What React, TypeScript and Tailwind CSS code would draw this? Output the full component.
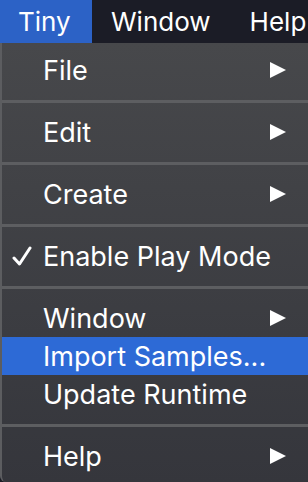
import React from "react";

type Item =
  | { kind: "sep" }
  | { kind: "item"; label: string; submenu?: boolean; checked?: boolean; active?: boolean };

const items: Item[] = [
  { kind: "item", label: "File", submenu: true },
  { kind: "sep" },
  { kind: "item", label: "Edit", submenu: true },
  { kind: "sep" },
  { kind: "item", label: "Create", submenu: true },
  { kind: "sep" },
  { kind: "item", label: "Enable Play Mode", checked: true },
  { kind: "sep" },
  { kind: "item", label: "Window", submenu: true },
  { kind: "item", label: "Import Samples...", active: true },
  { kind: "item", label: "Update Runtime" },
  { kind: "sep" },
  { kind: "item", label: "Help", submenu: true },
];

function Arrow() {
  return (
    <svg width="18" height="16" viewBox="0 0 18 16" className="shrink-0">
      <path d="M1 0 L17 8 L1 16 Z" fill="#ffffff" />
    </svg>
  );
}

function Check() {
  return (
    <svg width="20" height="20" viewBox="0 0 20 20">
      <path
        d="M2 12 L7.5 18 L18 2"
        fill="none"
        stroke="#ffffff"
        strokeWidth="3"
        strokeLinecap="round"
        strokeLinejoin="round"
      />
    </svg>
  );
}

export default function App() {
  return (
    <div
      className="w-[308px] h-[482px] overflow-hidden bg-[#1b1c25] text-white"
      style={{ fontFamily: "Inter, 'Noto Sans', sans-serif" }}
    >
      {/* menu bar */}
      <div className="flex h-[43px] items-center bg-[#1b1c26] text-[26px] leading-none">
        <div className="flex h-full w-[92px] items-center bg-[#2c62c6] pl-[18px]">Tiny</div>
        <div className="pl-[19px]">Window</div>
        <div className="pl-[39px] whitespace-nowrap">Help</div>
      </div>

      {/* dropdown */}
      <div className="h-[439px] w-[330px] rounded-bl-[6px] border-l-2 border-[#5c5d60] bg-gradient-to-b from-[#47484b] to-[#35363c] pt-[8px]">
        {items.map((it, i) =>
          it.kind === "sep" ? (
            <div key={i} className="pt-[11px] pb-[10px]">
              <div className="h-[3px] bg-[#5d5e61]" />
            </div>
          ) : (
            <div
              key={i}
              className={`flex h-[38px] items-center text-[27px] leading-none ${
                it.active ? "bg-[#2d6ad6]" : ""
              }`}
            >
              <div className="flex w-[41px] shrink-0 justify-end pr-[11px]">
                {it.checked ? <Check /> : null}
              </div>
              <div className="w-[226px] shrink-0 whitespace-nowrap">{it.label}</div>
              <div className="shrink-0">{it.submenu ? <Arrow /> : null}</div>
            </div>
          )
        )}
      </div>
    </div>
  );
}
